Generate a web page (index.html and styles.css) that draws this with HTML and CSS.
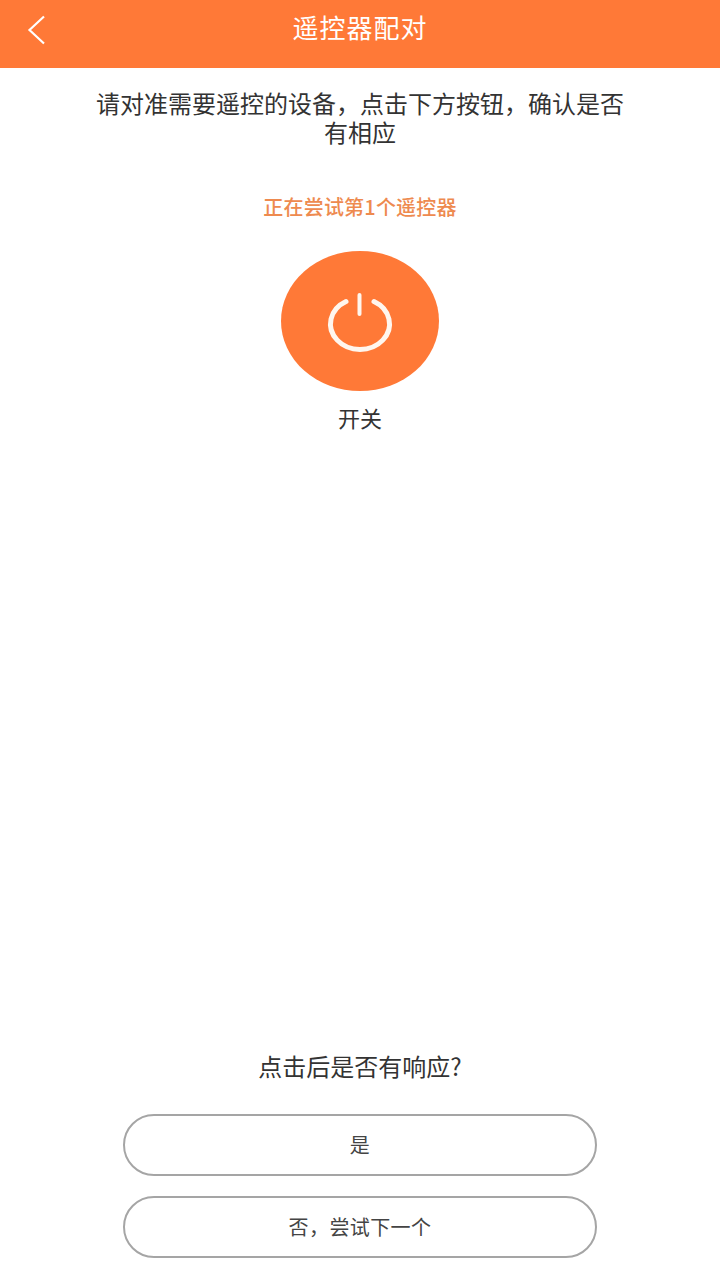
FILE: index.html
```html
<!DOCTYPE html>
<html lang="zh-CN">
<head>
<meta charset="utf-8" />
<title>遥控器配对</title>
<link rel="stylesheet" href="styles.css">
</head>

<body>

<div class="page">

  <div class="header">
    <svg class="back" width="20" height="32" viewBox="0 0 20 32">
      <path d="M17 1.5 L2.5 15 L17 28.5" fill="none" stroke="#fff" stroke-width="2.2" />
    </svg>
    <div class="title">遥控器配对</div>
  </div>

  <div class="hint">请对准需要遥控的设备，点击下方按钮，确认是否有相应</div>
  <div class="trying">正在尝试第1个遥控器</div>

  <div class="power">
    <svg width="70" height="70" viewBox="0 0 70 70">
      <path d="M21 15.5 A 29.5 25.5 0 1 0 49 15.5" fill="none" stroke="#fff6ee" stroke-width="5" stroke-linecap="round" />
      <path d="M34.5 9 L34.5 28" fill="none" stroke="#fff6ee" stroke-width="4" stroke-linecap="round" />
    </svg>
  </div>
  <div class="power-label">开关</div>

  <div class="bottom">
    <div class="question">点击后是否有响应?</div>
    <div class="btn">是</div>
    <div class="btn">否，尝试下一个</div>
  </div>

</div>

</body>
</html>
```

FILE: styles.css
```css
* { box-sizing: border-box; }

body {
  margin: 0;
  background-color: #fff;
  color: #333;
  font-family: "Noto Sans CJK SC", "Noto Sans", sans-serif;
}

.page {
  display: flex;
  flex-direction: column;
  align-items: center;
  height: 1280px;
  padding-bottom: 22px;
}

.header {
  position: relative;
  display: flex;
  align-items: center;
  justify-content: center;
  width: 100%;
  height: 68px;
  flex-shrink: 0;
  padding-bottom: 15px;
  background-color: #ff7937;
}

.back { position: absolute; left: 27px; top: 15px; }

.title {
  color: #fff;
  font-size: 26px;
  letter-spacing: 1px;
  line-height: 40px;
}

.hint {
  width: 530px;
  margin-top: 20px;
  font-size: 24px;
  line-height: 29px;
  text-align: center;
}

.trying {
  margin-top: 46px;
  color: #ee8a4f;
  font-size: 20px;
  font-weight: 500;
  letter-spacing: 0.2px;
  line-height: 30px;
}

.power {
  display: flex;
  align-items: center;
  justify-content: center;
  width: 158px;
  height: 140px;
  margin-top: 29px;
  border-radius: 50%;
  background-color: #ff7937;
}

.power-label {
  margin-top: 11px;
  font-size: 22px;
  line-height: 30px;
}

.bottom {
  display: flex;
  flex-direction: column;
  align-items: center;
  gap: 20px;
  margin-top: auto;
}

.question {
  margin-bottom: 13px;
  font-size: 24px;
  line-height: 30px;
}

.btn {
  display: flex;
  align-items: center;
  justify-content: center;
  width: 474px;
  height: 62px;
  padding-bottom: 2px;
  border: 2px solid #a5a5a5;
  border-radius: 31px;
  color: #444;
  font-size: 20px;
  letter-spacing: 0.4px;
}
```
